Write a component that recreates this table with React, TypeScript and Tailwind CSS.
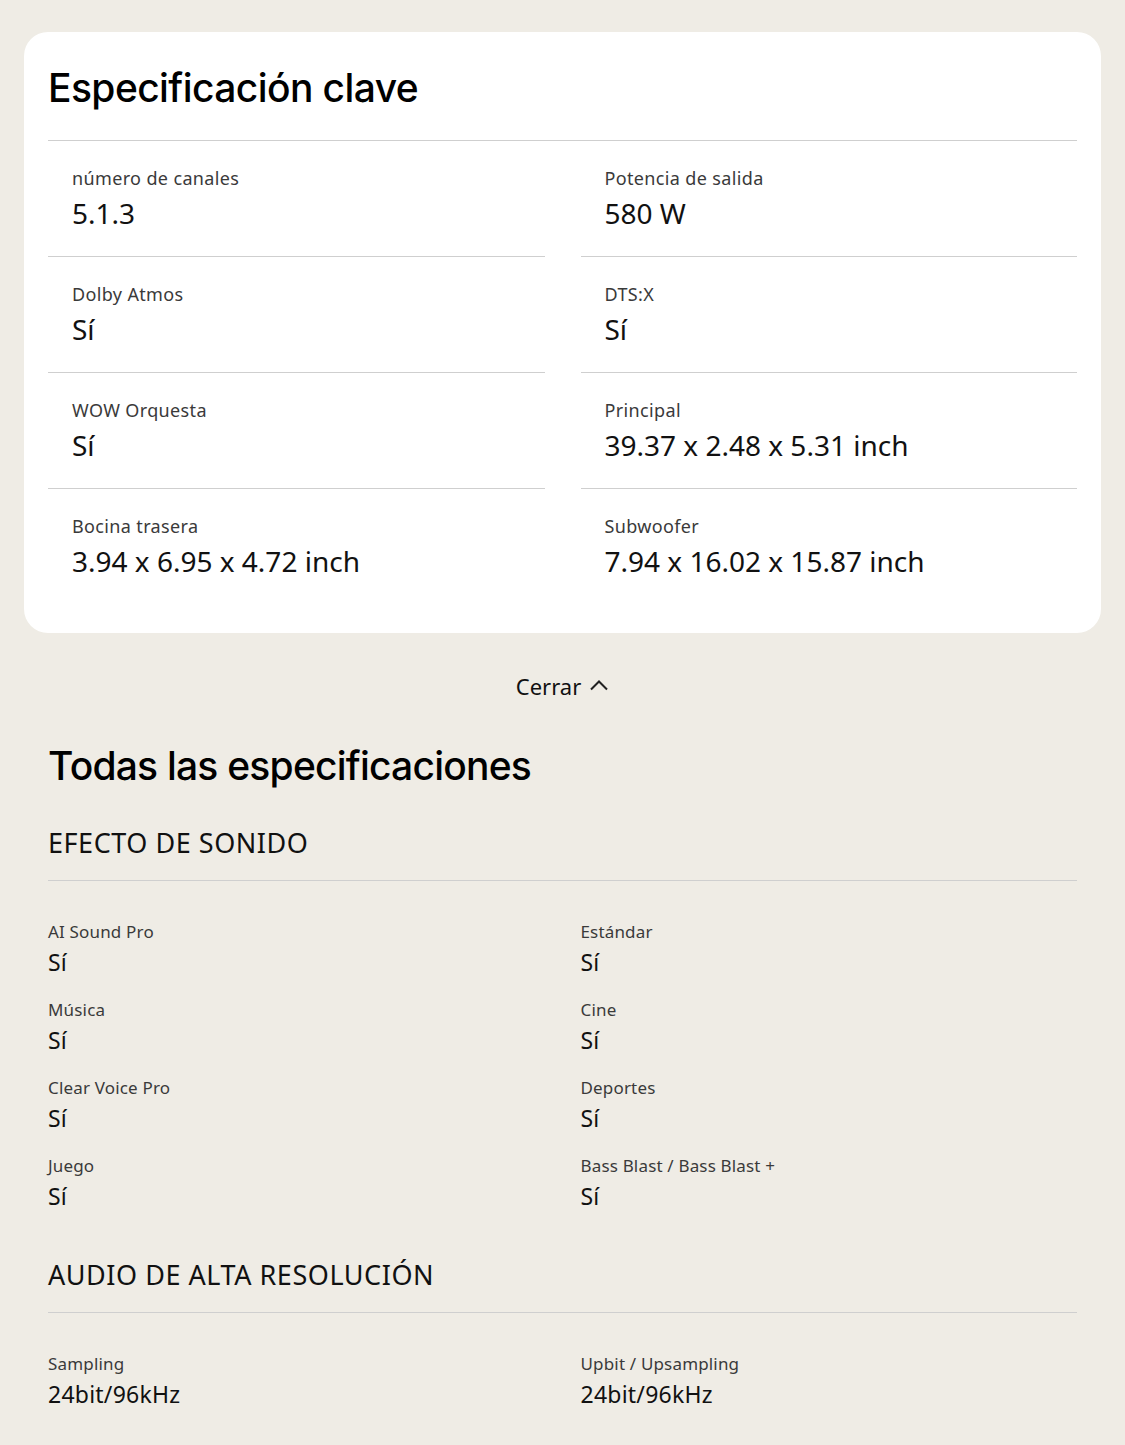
const keySpecs = [
  { label: "número de canales", value: "5.1.3" },
  { label: "Potencia de salida", value: "580 W" },
  { label: "Dolby Atmos", value: "Sí" },
  { label: "DTS:X", value: "Sí" },
  { label: "WOW Orquesta", value: "Sí" },
  { label: "Principal", value: "39.37 x 2.48 x 5.31 inch" },
  { label: "Bocina trasera", value: "3.94 x 6.95 x 4.72 inch" },
  { label: "Subwoofer", value: "7.94 x 16.02 x 15.87 inch" },
];

const sections = [
  {
    title: "EFECTO DE SONIDO",
    items: [
      { label: "AI Sound Pro", value: "Sí" },
      { label: "Estándar", value: "Sí" },
      { label: "Música", value: "Sí" },
      { label: "Cine", value: "Sí" },
      { label: "Clear Voice Pro", value: "Sí" },
      { label: "Deportes", value: "Sí" },
      { label: "Juego", value: "Sí" },
      { label: "Bass Blast / Bass Blast +", value: "Sí" },
    ],
  },
  {
    title: "AUDIO DE ALTA RESOLUCIÓN",
    items: [
      { label: "Sampling", value: "24bit/96kHz" },
      { label: "Upbit / Upsampling", value: "24bit/96kHz" },
    ],
  },
];

const body = "font-['Noto_Sans',sans-serif]";
const display = "font-['Inter',sans-serif]";

export default function App() {
  return (
    <div className={`min-h-[1445px] bg-[#efece5] px-6 pt-8 pb-10 ${body}`}>
      {/* key specs card */}
      <section className="rounded-[24px] bg-white px-6 pt-[32px] pb-7">
        <h2
          className={`${display} text-[39px] font-medium leading-[48px] tracking-[-0.015em] text-black`}
        >
          Especificación clave
        </h2>
        <div className="mt-[28px] grid grid-cols-2 gap-x-9 border-t border-[#cfcfcf]">
          {keySpecs.map((s, i) => (
            <div
              key={s.label}
              className={`h-[116px] px-6 pt-[25px] ${
                i < keySpecs.length - 2 ? "border-b border-[#cfcfcf]" : ""
              }`}
            >
              <p className="text-[18px] leading-6 tracking-[0.02em] text-[#3a3a3a]">{s.label}</p>
              <p className="mt-[7px] text-[28px] leading-8 text-[#111]">{s.value}</p>
            </div>
          ))}
        </div>
      </section>

      <button className="mx-auto mt-[39px] flex items-center gap-2 text-[22px] leading-7 text-[#111]">
        Cerrar
        <svg width="20" height="12" viewBox="0 0 20 12" fill="none" className="mt-[-2px]">
          <polyline points="2,10.5 10,2.5 18,10.5" stroke="#222" strokeWidth="2" />
        </svg>
      </button>

      <div className="px-6">
        <h2
          className={`${display} mt-[42px] text-[39px] font-medium leading-[48px] tracking-[-0.02em] text-black`}
        >
          Todas las especificaciones
        </h2>

        {sections.map((sec, si) => (
          <div key={sec.title} className={si === 0 ? "mt-[35px]" : "mt-[47px]"}>
            <h3 className="pb-[19px] text-[27px] leading-9 tracking-[0.02em] text-[#111]">
              {sec.title}
            </h3>
            <div className="grid grid-cols-2 gap-x-9 gap-y-[22px] border-t border-[#cfcfcf] pt-[39px]">
              {sec.items.map((it) => (
                <div key={it.label}>
                  <p className="text-[17px] leading-6 tracking-[0.01em] text-[#3a3a3a]">{it.label}</p>
                  <p className="mt-[4px] text-[23px] leading-7 tracking-[0.01em] text-[#111]">
                    {it.value}
                  </p>
                </div>
              ))}
            </div>
          </div>
        ))}
      </div>
    </div>
  );
}
